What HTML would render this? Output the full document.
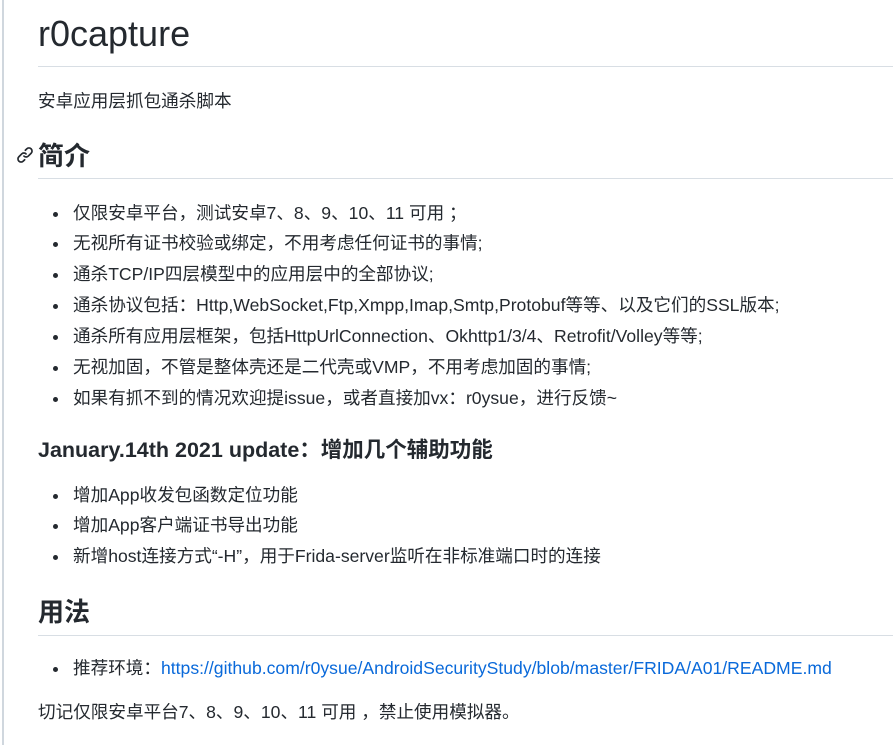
<!DOCTYPE html>
<html><head><meta charset="utf-8"><style>
body{margin:0;width:893px;height:745px;background:#fff;overflow:hidden;position:relative;font-family:"Liberation Sans","Noto Sans CJK SC",sans-serif;color:#24292f;}
.bl{position:absolute;left:2px;top:0;width:2px;height:745px;background:#d0d7de;}
.t{position:absolute;left:38px;white-space:nowrap;line-height:1;}
.hr{position:absolute;left:38px;right:0;height:1px;background:#d8dee4;}
.li{position:absolute;left:73px;font-size:17.6px;white-space:nowrap;line-height:1;}
.li:before{content:"";position:absolute;left:-20px;top:7px;width:5px;height:5px;border-radius:50%;background:#24292f;}
a{color:#0969da;text-decoration:none;}
</style></head><body>
<div class="bl"></div>
<div class="t" style="top:16px;font-size:36px;">r0capture</div>
<div class="hr" style="top:66px"></div>
<div class="t" style="top:93px;font-size:17.6px;">安卓应用层抓包通杀脚本</div>
<svg style="position:absolute;left:16px;top:146px" width="18" height="18" viewBox="0 0 16 16"><path fill="#24292f" d="M7.775 3.275a.75.75 0 001.06 1.06l1.25-1.25a2 2 0 112.83 2.830l-2.5 2.5a2 2 0 01-2.83 0 .75.75 0 00-1.06 1.06 3.5 3.5 0 004.95 0l2.5-2.5a3.5 3.5 0 00-4.95-4.95l-1.25 1.25zm-4.69 9.64a2 2 0 010-2.83l2.5-2.5a2 2 0 012.83 0 .75.75 0 001.06-1.06 3.5 3.5 0 00-4.95 0l-2.5 2.5a3.5 3.5 0 004.95 4.95l1.250-1.25a.75.75 0 00-1.06-1.06l-1.25 1.25a2 2 0 01-2.83 0z"/></svg>
<div class="t" style="top:143px;font-size:26px;font-weight:bold;">简介</div>
<div class="hr" style="top:178px"></div>
<div class="li" style="top:205px">仅限安卓平台，测试安卓7、8、9、10、11 可用 ；</div>
<div class="li" style="top:235px">无视所有证书校验或绑定，不用考虑任何证书的事情;</div>
<div class="li" style="top:266px">通杀TCP/IP四层模型中的应用层中的全部协议;</div>
<div class="li" style="top:297px">通杀协议包括：Http,WebSocket,Ftp,Xmpp,Imap,Smtp,Protobuf等等、以及它们的SSL版本;</div>
<div class="li" style="top:328px">通杀所有应用层框架，包括HttpUrlConnection、Okhttp1/3/4、Retrofit/Volley等等;</div>
<div class="li" style="top:359px">无视加固，不管是整体壳还是二代壳或VMP，不用考虑加固的事情;</div>
<div class="li" style="top:390px">如果有抓不到的情况欢迎提issue，或者直接加vx：r0ysue，进行反馈~</div>
<div class="t" style="top:440px;font-size:21.5px;font-weight:bold;">January.14th 2021 update：增加几个辅助功能</div>
<div class="li" style="top:487px">增加App收发包函数定位功能</div>
<div class="li" style="top:517px">增加App客户端证书导出功能</div>
<div class="li" style="top:548px">新增host连接方式“-H”，用于Frida-server监听在非标准端口时的连接</div>
<div class="t" style="top:599px;font-size:26px;font-weight:bold;">用法</div>
<div class="hr" style="top:635px"></div>
<div class="li" style="top:660px">推荐环境：<a>https://github.com/r0ysue/AndroidSecurityStudy/blob/master/FRIDA/A01/README.md</a></div>
<div class="t" style="top:704px;font-size:17.6px;">切记仅限安卓平台7、8、9、10、11 可用 ，禁止使用模拟器。</div>
</body></html>
